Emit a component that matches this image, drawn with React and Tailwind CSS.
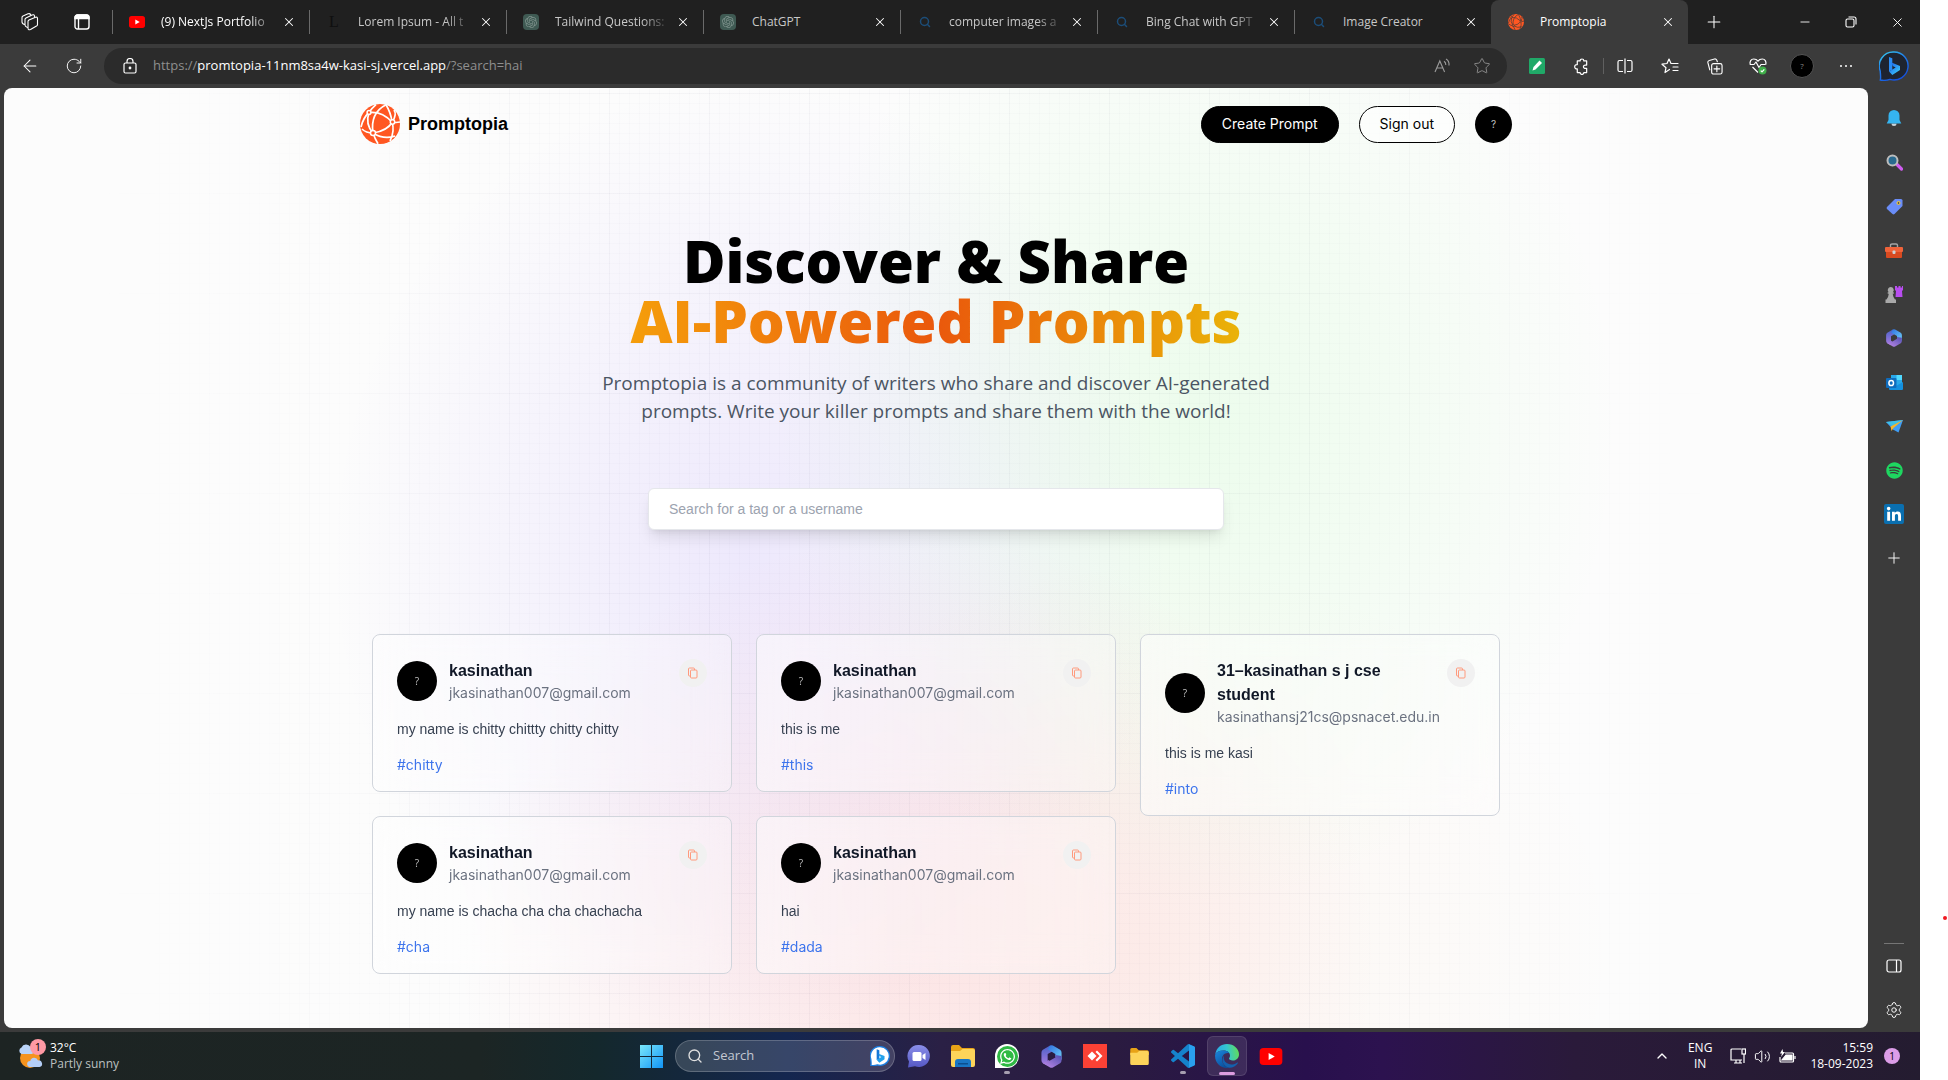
import React from "react";
import {
  Plus, Minus, X, ArrowLeft, RotateCw, Star, ChevronUp, Settings, Search, Volume2,
} from "lucide-react";
import { FaSpotify, FaWhatsapp } from "react-icons/fa";
import { SiOpenai } from "react-icons/si";

const UI = "font-['Open_Sans','Noto_Sans',sans-serif]";

/* ---------- logos ---------- */

function GlobeLogo({ className, line = "#fff" }) {
  return (
    <svg viewBox="0 0 40 40" className={className} aria-hidden="true">
      <circle cx="20" cy="20" r="20" fill="#ff5722" />
      <g fill="none" stroke={line} strokeWidth="1.7">
        <path d="M9 8.500Q22 7 32 18" />
        <path d="M9 8.500Q3 14 1 23" />
        <path d="M26 .8Q10 9 13 29" />
        <path d="M9 8.500Q5 20 13 29" />
        <path d="M32.500 18Q27 27 13 29" />
        <path d="M32.500 18Q37 10 34 6" />
        <path d="M32 18Q36 19 40 18" />
        <path d="M32 18Q35 27 30 37" />
        <path d="M13 29Q24 36 35 32" />
        <path d="M13 29Q15 35 18 39.800" />
        <path d="M13 29Q6 29 2 25" />
        <path d="M9 8.500Q12 4 16 .6" />
        <path d="M26 .8Q31 9 32 18" />
      </g>
      <g fill="#ff5722" stroke={line} strokeWidth="1.500">
        <circle cx="9" cy="8.500" r="1.900" />
        <circle cx="32.500" cy="18" r="2.200" />
        <circle cx="13" cy="29" r="2.500" />
      </g>
    </svg>
  );
}

function YouTube({ className }) {
  return (
    <svg viewBox="0 0 24 18" className={className} aria-hidden="true">
      <rect width="24" height="18" rx="4" fill="#f00" />
      <path d="M9.500 5.300v7.400l6.500-3.700z" fill="#fff" />
    </svg>
  );
}

function OpenAi({ className }) {
  return (
    <span className={`${className} flex items-center justify-center rounded-sm bg-[#3f5a53] text-[#7d918b]`}>
      <SiOpenai size={12} />
    </span>
  );
}

function Bing({ className }) {
  return (
    <svg viewBox="0 0 30 30" className={className} aria-hidden="true">
      <defs>
        <linearGradient id="bingRing" x1="0" y1="0" x2="0.600" y2="1">
          <stop offset="0" stopColor="#37d4f5" />
          <stop offset="0.500" stopColor="#1f7be8" />
          <stop offset="1" stopColor="#1552e0" />
        </linearGradient>
        <linearGradient id="bingB" x1="0" y1="0" x2="1" y2="1">
          <stop offset="0" stopColor="#1b5bf0" />
          <stop offset="1" stopColor="#3fd8f7" />
        </linearGradient>
      </defs>
      <path d="M15 1a14 14 0 1 1-4 27.400C8 29.300 4 29.500 1.300 29 2 27 1.500 24 1.200 20A14 14 0 0 1 15 1z" fill="#1e2430" stroke="url(#bingRing)" strokeWidth="1.400" />
      <path d="M10 6l3.300 1.200v11.500l-3.300 1.900z" fill="#2a8cf4" />
      <path d="M10 20.500l3.300-2 3.400-2-3-1.400-1.200-3.500 8.500 3.300v4L13.300 24z" fill="url(#bingB)" />
    </svg>
  );
}

function BingBubble({ className }) {
  return (
    <svg viewBox="0 0 30 30" className={className} aria-hidden="true">
      <path d="M15 1a14 14 0 1 1-4 27.400C8 29.300 4 29.500 1.300 29 2 27 1.500 24 1.200 20A14 14 0 0 1 15 1z" fill="#fff" stroke="#1b7ee0" strokeWidth="2" />
      <path d="M10 5l4 1.300v12.700l-4 2z" fill="#1577d8" />
      <path d="M10 20.500l4-2 3-2-3-1.400-1.200-3.500 9 3.300v5L14 25z" fill="#22a2ec" />
    </svg>
  );
}

function M365({ className }) {
  return (
    <svg viewBox="0 0 24 24" className={className} aria-hidden="true">
      <defs>
        <linearGradient id="m365a" x1="0" y1="0" x2="1" y2="1">
          <stop offset="0" stopColor="#2f6fe0" />
          <stop offset="1" stopColor="#6fd2f8" />
        </linearGradient>
        <linearGradient id="m365b" x1="0" y1="0" x2="0" y2="1">
          <stop offset="0" stopColor="#4a62c8" />
          <stop offset="1" stopColor="#a97be0" />
        </linearGradient>
        <linearGradient id="m365c" x1="0" y1="1" x2="1" y2="0">
          <stop offset="0" stopColor="#c38bea" />
          <stop offset="1" stopColor="#4f4fb0" />
        </linearGradient>
      </defs>
      <path d="M10.500 .6L3 5Q1.500 6 1.500 8v8q0 2 1.500 3l5 2.500V9.500L16 5z" fill="url(#m365b)" />
      <path d="M8 4.500l2.500-3.900q1.500-.8 3 0L21 5q1.500 1 1.500 3v7.500L16 12V9.300z" fill="url(#m365a)" />
      <path d="M22.500 11.500V16q0 2-1.500 3l-7.500 4.400q-1.500.8-3 0L3 19l5-2.500 0-1 2 1 6-3.500v-2.500z" fill="url(#m365c)" />
    </svg>
  );
}

function Folder({ className, dock }) {
  return (
    <svg viewBox="0 0 24 22" className={className} aria-hidden="true">
      <path d="M0 2a2 2 0 0 1 2-2h6l3 3h11a2 2 0 0 1 2 2v4H0z" fill="#e8a317" />
      <path d="M0 6h9l2.500-2H22a2 2 0 0 1 2 2v14a2 2 0 0 1-2 2H2a2 2 0 0 1-2-2z" fill="#fdd45a" />
      {dock && <path d="M4 22v-5a3 3 0 0 1 3-3h10a3 3 0 0 1 3 3v5z" fill="#1976c5" />}
      {dock && <path d="M7 18h10v1.500H7z" fill="#0c4f8f" />}
    </svg>
  );
}

function VsCode({ className }) {
  return (
    <svg viewBox="0 0 24 24" className={className} aria-hidden="true">
      <path
        fill="#1583cc"
        d="M23.150 2.587L18.210.210a1.494 1.494 0 0 0-1.705.290l-9.460 8.630-4.120-3.128a.999.999 0 0 0-1.276.057L.327 7.261A1 1 0 0 0 .326 8.740L3.899 12 .326 15.260a1 1 0 0 0 .001 1.479L1.650 17.940a.999.999 0 0 0 1.276.057l4.120-3.128 9.460 8.630a1.492 1.492 0 0 0 1.704.290l4.942-2.377A1.500 1.500 0 0 0 24 20.060V3.939a1.500 1.500 0 0 0-.850-1.352zm-5.146 14.861L10.826 12l7.178-5.448v10.896z"
      />
      <path d="M18 .2l5.200 2.400A1.500 1.500 0 0 1 24 4v16a1.500 1.500 0 0 1-.8 1.400L18 23.800z" fill="#2aa0ee" />
    </svg>
  );
}

function Edge({ className }) {
  return (
    <svg viewBox="0 0 24 24" className={className} aria-hidden="true">
      <defs>
        <linearGradient id="edgeA" x1="0" y1="0.500" x2="1" y2="0.400">
          <stop offset="0" stopColor="#2aa8e8" />
          <stop offset="0.500" stopColor="#33c6d0" />
          <stop offset="1" stopColor="#62dd58" />
        </linearGradient>
        <linearGradient id="edgeB" x1="0" y1="0" x2="0.600" y2="1">
          <stop offset="0" stopColor="#1b86dc" />
          <stop offset="1" stopColor="#0b4f9c" />
        </linearGradient>
      </defs>
      <path d="M.2 10.500C1.200 4 6 0 12 0c7 0 12 5 12 10.200 0 4-3 6.300-6.200 6.300-2.500 0-3.800-1-3.800-1.900 0-.8 1-1.200 1-3.200C15 8.700 12.500 6.500 8.700 6.500 4.500 6.500 1.500 8 .2 10.500z" fill="url(#edgeA)" />
      <path d="M.1 11C1 8 4.500 6.500 8.500 6.500c3 0 5 1.300 6 3-1.500-1-5.500-.5-7 3-1.800 4.500 1.300 10 6.500 11.300C6 25-.5 19 .1 11z" fill="url(#edgeB)" />
      <path d="M9 11.500c-1.500 5.500 3.500 9.500 8.500 9 2-.2 4-1.300 4.900-2 .5-.3.900.1.600.6C21 22.200 17.500 24 14 23.800 8 22 5.500 16 9 11.500z" fill="#1460ad" />
    </svg>
  );
}

function AnyDesk({ className }) {
  return (
    <svg viewBox="0 0 24 24" className={className} aria-hidden="true">
      <rect width="24" height="24" fill="#fb4135" />
      <path d="M9 7.500l4.500 4.500L9 16.500 4.500 12z" fill="#fff" />
      <path d="M12.500 8l1.500-1.500 5.500 5.500-5.500 5.500-1.500-1.500 4-4z" fill="#fff" />
    </svg>
  );
}

function VideoChat({ className }) {
  return (
    <svg viewBox="0 0 24 24" className={className} aria-hidden="true">
      <defs>
        <linearGradient id="vc" x1="0" y1="0" x2="0" y2="1">
          <stop offset="0" stopColor="#8a8ee8" />
          <stop offset="1" stopColor="#5558c4" />
        </linearGradient>
      </defs>
      <path d="M12 1a11 11 0 1 1-4 21.300L1 23.500l1-6A11 11 0 0 1 12 1z" fill="url(#vc)" />
      <rect x="5.500" y="8" width="9" height="9" rx="1.500" fill="#fff" />
      <path d="M15.500 11l3-2v7l-3-2z" fill="#fff" />
    </svg>
  );
}

function WindowsLogo({ className }) {
  return (
    <svg viewBox="0 0 23 23" className={className} aria-hidden="true">
      <defs>
        <linearGradient id="win" gradientUnits="userSpaceOnUse" x1="0" y1="0" x2="23" y2="23">
          <stop offset="0" stopColor="#7ae8fb" />
          <stop offset="1" stopColor="#1194f6" />
        </linearGradient>
      </defs>
      <path d="M0 0h11v11H0zM12 0h11v11H12zM0 12h11v11H0zM12 12h11v11H12z" fill="url(#win)" />
    </svg>
  );
}

function Weather({ className }) {
  return (
    <svg viewBox="0 0 26 26" className={className} aria-hidden="true">
      <circle cx="12" cy="15" r="10" fill="#f5931e" />
      <path d="M3.500 11a3.500 3.500 0 0 1 0-6.500 5 5 0 0 1 9-.5 3.500 3.500 0 0 1 1 7z" fill="#b9d3f8" />
      <path d="M12 24a3 3 0 0 1 .3-6 4 4 0 0 1 7.700-.5 3.300 3.300 0 0 1 1.500 6.500z" fill="#b3cdf6" />
    </svg>
  );
}

/* ---------- browser chrome ---------- */

const tabs = [
  { title: "(9) NextJs Portfolio", icon: <YouTube className="h-3 w-4" />, bright: true, fade: true },
  { title: "Lorem Ipsum - All t", icon: <span className="w-4 text-center font-['Liberation_Serif',serif] text-base text-[#0f0f0f]">L</span>, fade: true },
  { title: "Tailwind Questions:", icon: <OpenAi className="size-4" />, fade: true },
  { title: "ChatGPT", icon: <OpenAi className="size-4" /> },
  { title: "computer images a", icon: <Search className="size-3 text-[#1c4d78]" strokeWidth={3} />, fade: true },
  { title: "Bing Chat with GPT", icon: <Search className="size-3 text-[#1c4d78]" strokeWidth={3} />, fade: true },
  { title: "Image Creator", icon: <Search className="size-3 text-[#1c4d78]" strokeWidth={3} /> },
  { title: "Promptopia", icon: <GlobeLogo className="size-4" line="#3b3b3b" />, active: true },
];

function Tab({ title, icon, active, bright, fade }) {
  return (
    <div className={`flex h-full max-w-[197px] min-w-0 flex-1 items-center ${active ? "rounded-t-lg bg-[#3b3b3b]" : ""}`}>
      <span className={`h-6 w-px shrink-0 ${active ? "" : "bg-[#6a6a6a]"}`} />
      <button className={`ml-4 flex min-w-0 flex-1 items-center gap-4 text-left ${bright || active ? "text-white" : "text-[#c8c8c8]"}`}>
        <span className="flex w-4 shrink-0 items-center justify-center">{icon}</span>
        <span className={`min-w-0 flex-1 overflow-hidden text-[12px] whitespace-nowrap ${fade ? "[mask-image:linear-gradient(to_right,#000_75%,transparent)]" : ""}`}>{title}</span>
      </button>
      <button aria-label={`Close ${title}`} className="mr-2 flex size-6 shrink-0 items-center justify-center text-white">
        <X size={14} strokeWidth={1.75} />
      </button>
    </div>
  );
}

function TitleBar() {
  return (
    <header className="flex h-11 shrink-0 items-center bg-[#202020] text-white">
      <div className="flex w-28 shrink-0 items-center gap-[35px] pl-[21px]">
        <button aria-label="Workspaces">
          <svg viewBox="0 0 18 18" className="size-[18px]" fill="none" stroke="currentColor" strokeWidth="1.100" strokeLinejoin="round">
            <path d="M7 8.500Q7 7.500 8 7l6.500-2.700q2-.6 2 1.200v6q0 1-1 1.600L9.500 16.500Q7 17.500 7 15z" />
            <path d="M7 14.500l-1-.3Q4 13.500 4 12V6.500Q4 5.500 5 5l6-3q2-.8 2.500.8V4.500" />
            <path d="M4 11.500Q1 11 1 9V4.500Q1 3.500 2 3l5-2.200q1.800-.6 2.500.6l.3 1" />
          </svg>
        </button>
        <button aria-label="Tab actions">
          <svg viewBox="0 0 16 16" className="size-4" fill="none" stroke="currentColor" strokeWidth="1.400">
            <rect x="1" y="1" width="14" height="14" rx="2.500" />
            <path d="M1 3.500A2.500 2.500 0 0 1 3.500 1h9A2.500 2.500 0 0 1 15 3.500V4.500H1z" fill="currentColor" />
            <path d="M4.500 5v10" />
          </svg>
        </button>
      </div>
      <div className="flex h-full min-w-0 flex-1 items-center">
        {tabs.map((t) => <Tab key={t.title} {...t} />)}
        <button aria-label="New tab" className="ml-2.5 flex size-8 items-center justify-center"><Plus size={20} strokeWidth={1.25} /></button>
      </div>
      <button aria-label="Minimise" className="flex w-[46px] justify-center"><Minus size={14} strokeWidth={1.5} /></button>
      <button aria-label="Restore" className="flex w-[46px] justify-center">
        <svg viewBox="0 0 12 12" className="size-3" fill="none" stroke="currentColor" strokeWidth="1.100">
          <rect x="1" y="3" width="8" height="8" rx="1.500" />
          <path d="M3.500 1H9a2 2 0 0 1 2 2v5.500" />
        </svg>
      </button>
      <button aria-label="Close" className="flex w-[46px] justify-center"><X size={15} strokeWidth={1.5} /></button>
    </header>
  );
}

function ToolBar() {
  return (
    <div className="flex h-11 shrink-0 items-center bg-[#3b3b3b] text-white">
      <div className="flex w-[104px] shrink-0 items-center">
        <button aria-label="Back" className="ml-[19px] flex w-[22px] justify-center"><ArrowLeft size={20} strokeWidth={1.25} /></button>
        <button aria-label="Refresh" className="ml-[22px] flex w-[22px] justify-center"><RotateCw size={18} strokeWidth={1.25} /></button>
      </div>
      <div className="flex h-9 min-w-0 flex-1 items-center rounded-full bg-[#2b2b2b] pr-4 pl-[19px]">
        <svg viewBox="0 0 14 16" className="mr-4 h-4 w-[14px] shrink-0" fill="none" stroke="currentColor" strokeWidth="1.200">
          <rect x="1" y="5" width="12" height="10" rx="1.500" />
          <path d="M4 5V3.500a3 3 0 0 1 6 0V5" />
          <circle cx="7" cy="10" r=".8" fill="currentColor" />
        </svg>
        <div className="min-w-0 flex-1 truncate text-[13px] text-[#8f8f8f]">
          https://<span className="text-white">promtopia-11nm8sa4w-kasi-sj.vercel.app</span>/?search=hai
        </div>
        <button aria-label="Read aloud" className="mr-[22px] text-[#9a9a9a]">
          <svg viewBox="0 0 17 16" className="h-4 w-[17px]" fill="none" stroke="currentColor" strokeWidth="1.100">
            <path d="M1 14L5.800 3 10.600 14M2.800 10h6M10 3.200Q12 4.500 11.800 7M12 1Q15.500 3 15 7.500" />
          </svg>
        </button>
        <button aria-label="Add to favourites" className="text-[#9a9a9a]"><Star size={18} strokeWidth={1.1} /></button>
      </div>
      <div className="flex w-[413px] shrink-0 items-center">
        <button aria-label="Editor extension" className="ml-[19px] flex w-[22px] justify-center">
          <svg viewBox="0 0 16 16" className="size-4">
            <rect width="16" height="16" rx="1.500" fill="#20a968" />
            <path d="M3.500 12.500l1-3.500 6-6.500 2.500 2.500-6.500 6.500z" fill="#fff" />
          </svg>
        </button>
        <button aria-label="Extensions" className="ml-[22px] flex w-[22px] justify-center">
          <svg viewBox="0 0 16 18" className="h-[17px] w-[15px]" fill="none" stroke="currentColor" strokeWidth="1.300" strokeLinejoin="round">
            <path d="M3.500 3h3a2 2 0 1 1 4 0h3v4.500h-1.200a1.800 1.800 0 1 0 0 3.500h1.200v4.500h-3a2 2 0 1 1-4 0h-3V11.500a2.300 2.300 0 1 1 0-4.500z" />
          </svg>
        </button>
        <span className="ml-[11px] h-4 w-px bg-[#606060]" />
        <button aria-label="Split screen" className="ml-[10px] flex w-[22px] justify-center">
          <svg viewBox="0 0 16 16" className="size-4" fill="none" stroke="currentColor" strokeWidth="1.200">
            <path d="M6 2.500H2.500A1.500 1.500 0 0 0 1 4v8a1.500 1.500 0 0 0 1.500 1.500H6M10 2.500h3.500A1.500 1.500 0 0 1 15 4v8a1.500 1.500 0 0 1-1.500 1.500H10M8 .5v15" />
          </svg>
        </button>
        <button aria-label="Favourites" className="ml-[23px] flex w-[22px] justify-center">
          <svg viewBox="0 0 18 16" className="h-4 w-[18px]" fill="none" stroke="currentColor" strokeWidth="1.200" strokeLinejoin="round" strokeLinecap="round">
            <path d="M8.500 11.500L4 14.500l1-4.800L1 6.200l5-.7L8 1l2 4.500h7M12 9h5M12 12.500h5" />
          </svg>
        </button>
        <button aria-label="Collections" className="ml-[22px] flex w-[22px] justify-center">
          <svg viewBox="0 0 18 18" className="size-[17px]" fill="none" stroke="currentColor" strokeWidth="1.200" strokeLinecap="round">
            <rect x="6" y="6" width="11" height="11" rx="2" />
            <path d="M11.500 8.500v6M8.500 11.500h6M4 12.500L2 5a2 2 0 0 1 1.500-2.400L9 1a2 2 0 0 1 2.500 1.500L12 4" />
          </svg>
        </button>
        <button aria-label="Browser essentials" className="ml-[22px] flex w-[22px] justify-center">
          <svg viewBox="0 0 18 18" className="size-[18px]" fill="none" stroke="currentColor" strokeWidth="1.200" strokeLinejoin="round">
            <path d="M9 15.500L3.500 10M1.200 7.500C.5 4.500 2 2 4.700 2 7 2 8.200 3 9 4.200 9.800 3 11 2 13.300 2 16 2 17.500 4.500 16.800 7.500M1 7.500h4L7 5l3 5.500 2-3h4.500" />
            <circle cx="13.500" cy="13.500" r="4" fill="#3fae49" stroke="none" />
            <path d="M11.700 13.600l1.300 1.200 2.300-2.500" />
          </svg>
        </button>
        <button aria-label="Profile" className="ml-[21px] flex size-6 items-center justify-center rounded-full border border-[#555] bg-black text-[8px] text-[#888]">?</button>
        <button aria-label="Settings and more" className="ml-[21px] flex w-[22px] items-center justify-center gap-[3px]">
          <span className="size-[2px] rounded-full bg-white" /><span className="size-[2px] rounded-full bg-white" /><span className="size-[2px] rounded-full bg-white" />
        </button>
        <button aria-label="Bing" className="ml-[22px]"><Bing className="size-[30px]" /></button>
      </div>
    </div>
  );
}

function SideIcon({ label, children }) {
  return <button aria-label={label} className="flex h-11 w-full items-center justify-center">{children}</button>;
}

function SideBar() {
  return (
    <aside className="flex w-[52px] shrink-0 flex-col bg-[#3b3b3b] pt-2 text-white">
      <SideIcon label="Notifications">
        <svg viewBox="0 0 16 18" className="h-[18px] w-4">
          <path d="M5.500 14.500h5a2.500 2.500 0 0 1-5 0z" fill="#c9d3da" />
          <path d="M8 1a5.500 5.500 0 0 1 5.500 5.500V11l1.800 3.500H.700L2.500 11V6.500A5.500 5.500 0 0 1 8 1z" fill="#35b4f0" />
        </svg>
      </SideIcon>
      <SideIcon label="Search">
        <svg viewBox="0 0 17 17" className="size-[17px]">
          <path d="M11 10.500l4.500 4.500" stroke="#d05cf0" strokeWidth="3.200" strokeLinecap="round" />
          <circle cx="6.500" cy="6.500" r="5" fill="#2a6a8f" stroke="#bdbdbd" strokeWidth="2" />
        </svg>
      </SideIcon>
      <SideIcon label="Shopping">
        <svg viewBox="0 0 17 17" className="size-[17px]">
          <path d="M9 1h6a1.500 1.500 0 0 1 1.500 1.500V8L8.500 16a1.500 1.500 0 0 1-2 0L1 11a1.500 1.500 0 0 1 0-2z" fill="#6a8df8" />
          <circle cx="12.500" cy="5" r="1.500" fill="#555" stroke="#ffd22e" strokeWidth="1" />
        </svg>
      </SideIcon>
      <SideIcon label="Tools">
        <svg viewBox="0 0 18 15" className="h-[15px] w-[18px]">
          <path d="M5.500 4V2.200Q5.500 1 7 1h4q1.500 0 1.500 1.200V4" fill="none" stroke="#a5a5a5" strokeWidth="1.400" />
          <rect y="4" width="18" height="5" rx="1" fill="#f0633a" />
          <path d="M1 9h16v5a1 1 0 0 1-1 1H2a1 1 0 0 1-1-1z" fill="#d94a20" />
          <rect x="7.500" y="7.500" width="3" height="3.500" rx="1" fill="#cfd3d6" />
        </svg>
      </SideIcon>
      <SideIcon label="Games">
        <svg viewBox="0 0 18 18" className="size-[18px]">
          <path d="M10 1h2v1.500h1.500V1h2v1.500H17V1h1v4l-1 1 .5 6H10.500L11 6l-1-1z" fill="#b84df0" />
          <path d="M5.800 2a3 3 0 0 1 2 5.200h1v1.600H7.700Q8 12 10 14.500h1V18H.500v-3.500h1Q3.500 12 3.800 8.800H2.700V7.200h1A3 3 0 0 1 5.800 2z" fill="#a9a9a9" />
        </svg>
      </SideIcon>
      <SideIcon label="Microsoft 365"><M365 className="size-[18px]" /></SideIcon>
      <SideIcon label="Outlook">
        <svg viewBox="0 0 17 17" className="size-[17px]">
          <path d="M5 1h11v14H5z" fill="#28a8ea" />
          <path d="M10.500 1H16v5h-5.500z" fill="#50d9ff" />
          <path d="M3 9l7 3 7-4v7a1 1 0 0 1-1 1H4a1 1 0 0 1-1-1z" fill="#1490df" />
          <rect y="4" width="10.500" height="10" rx="1" fill="#0f6cbd" />
          <ellipse cx="5.200" cy="9" rx="2.300" ry="2.600" fill="none" stroke="#fff" strokeWidth="1.500" />
        </svg>
      </SideIcon>
      <SideIcon label="Drop">
        <svg viewBox="0 0 17 13" className="h-[13px] w-[17px]">
          <path d="M0 2l17-2-4.500 12.500L7 9.500z" fill="#3f9df5" />
          <path d="M0 2l17-2L6 6z" fill="#3ec1e8" />
          <path d="M17 0L4.500 6.500 5.500 11 7.500 8z" fill="#f7b52c" />
        </svg>
      </SideIcon>
      <SideIcon label="Spotify"><FaSpotify size={17} className="text-[#1ed760]" /></SideIcon>
      <SideIcon label="LinkedIn">
        <span className="flex size-5 items-center justify-center rounded-xs bg-[#0a6fb0]">
          <svg viewBox="0 0 20 20" className="size-5" fill="#fff">
            <path d="M3.200 7.800h2.900v9H3.200zM8 7.800h2.800v1.300c.6-1 1.600-1.500 2.800-1.500 2.500 0 3.400 1.500 3.400 4.200v5h-2.900v-4.600c0-1.400-.4-2.200-1.500-2.200-1.200 0-1.700.8-1.700 2.200v4.600H8z" />
            <circle cx="4.650" cy="4.600" r="1.800" />
          </svg>
        </span>
      </SideIcon>
      <SideIcon label="Customise"><Plus size={18} strokeWidth={1.25} /></SideIcon>
      <div className="mt-auto flex flex-col items-center">
        <span className="h-px w-5 bg-[#757575]" />
        <SideIcon label="Hide sidebar">
          <svg viewBox="0 0 16 16" className="size-4" fill="none" stroke="currentColor" strokeWidth="1.200">
            <rect x="1" y="2" width="14" height="12" rx="2" />
            <path d="M10.500 2v12" />
          </svg>
        </SideIcon>
        <SideIcon label="Settings"><Settings size={18} strokeWidth={1.25} /></SideIcon>
      </div>
    </aside>
  );
}

/* ---------- page ---------- */

const columns = [
  [
    { name: "kasinathan", email: "jkasinathan007@gmail.com", prompt: "my name is chitty chittty chitty chitty", tag: "#chitty" },
    { name: "kasinathan", email: "jkasinathan007@gmail.com", prompt: "my name is chacha cha cha chachacha", tag: "#cha" },
  ],
  [
    { name: "kasinathan", email: "jkasinathan007@gmail.com", prompt: "this is me", tag: "#this" },
    { name: "kasinathan", email: "jkasinathan007@gmail.com", prompt: "hai", tag: "#dada" },
  ],
  [{ name: "31–kasinathan s j cse student", email: "kasinathansj21cs@psnacet.edu.in", prompt: "this is me kasi", tag: "#into" }],
];

function PromptCard({ name, email, prompt, tag }) {
  return (
    <article className="rounded-lg border border-gray-300 bg-[linear-gradient(to_right,rgba(255,255,255,0.5),rgba(255,255,255,0.3))] p-6 pb-4 backdrop-blur-lg">
      <div className="flex items-start justify-between gap-5">
        <div className="flex min-w-0 flex-1 items-center gap-3">
          <span className="flex size-10 shrink-0 items-center justify-center rounded-full bg-black text-[10px] text-[#c0c0c0]">?</span>
          <div className="min-w-0">
            <h3 className="font-['Liberation_Sans',sans-serif] text-base font-bold text-[#111827]">{name}</h3>
            <p className="font-['Inter',sans-serif] text-sm whitespace-nowrap text-[#6b7280]">{email}</p>
          </div>
        </div>
        <button aria-label="Copy prompt" className="flex size-7 shrink-0 items-center justify-center rounded-full bg-[#f1f1f1]">
          <svg viewBox="0 0 12 12" className="size-3" fill="none" stroke="#ff9a7d" strokeWidth="1">
            <rect x="3.500" y="3" width="6.500" height="8" rx="1" />
            <path d="M3.500 9H2.500a1 1 0 0 1-1-1V2a1 1 0 0 1 1-1h4a1 1 0 0 1 1 1v1" />
          </svg>
        </button>
      </div>
      <p className="my-4 font-['Liberation_Sans',sans-serif] text-sm text-[#374151]">{prompt}</p>
      <a href="#tag" className="block font-['Inter',sans-serif] text-sm text-[#3d74ec]">{tag}</a>
    </article>
  );
}

function Backdrop() {
  return (
    <div className="pointer-events-none absolute inset-0" aria-hidden="true">
      <div className="absolute inset-0 bg-[radial-gradient(ellipse_420px_480px_at_40%_50%,rgba(130,90,255,0.12),rgba(130,90,255,0.06)_50%,transparent),radial-gradient(ellipse_420px_480px_at_64%_36%,rgba(130,255,130,0.13),rgba(130,255,130,0.07)_50%,transparent),radial-gradient(ellipse_460px_420px_at_49%_92%,rgba(255,80,100,0.12),rgba(255,80,100,0.07)_50%,transparent),radial-gradient(ellipse_460px_400px_at_62%_92%,rgba(255,150,60,0.05),transparent)]" />
      <div className="absolute inset-0 bg-[linear-gradient(to_right,rgba(60,60,90,0.014)_1px,transparent_1px),linear-gradient(to_bottom,rgba(60,60,90,0.014)_1px,transparent_1px),linear-gradient(to_right,rgba(60,60,90,0.022)_1px,transparent_1px),linear-gradient(to_bottom,rgba(60,60,90,0.022)_1px,transparent_1px)] [mask-image:linear-gradient(to_right,transparent_5%,#000_30%,#000_70%,transparent_92%)] bg-[size:10px_10px,10px_10px,100px_100px,100px_100px] bg-[position:5px_5px]" />
    </div>
  );
}

function Page() {
  return (
    <main className="relative mb-1 min-w-0 flex-1 overflow-hidden rounded-lg bg-[#fcfcfc]">
      <Backdrop />
      <div className="relative mx-auto flex max-w-[1280px] flex-col items-center px-16">
        <nav className="flex w-full items-center justify-between pt-4">
          <a href="#home" className="flex items-center gap-2">
            <GlobeLogo className="size-10" />
            <span className="font-['Liberation_Sans',sans-serif] text-lg font-bold text-black">Promptopia</span>
          </a>
          <div className="flex items-center gap-5 font-['Inter',sans-serif] text-sm">
            <button className="h-[37px] rounded-full border border-black bg-black px-5 text-white">Create Prompt</button>
            <button className="h-[37px] rounded-full border border-black bg-white/60 px-5 text-black">Sign out</button>
            <button aria-label="Profile" className="flex size-[37px] items-center justify-center rounded-full bg-black text-[10px] text-[#c0c0c0]">?</button>
          </div>
        </nav>
        <section className="mt-[87px] flex flex-col items-center text-center font-['Open_Sans','Noto_Sans',sans-serif]">
          <h1 className="text-[58px] leading-[60px] font-extrabold text-black">
            Discover &amp; Share
            <br />
            <span className="bg-[linear-gradient(to_right,#f59e0b,#ea580c,#eab308)] bg-clip-text text-transparent">AI-Powered Prompts</span>
          </h1>
          <p className="mt-[18px] max-w-[680px] text-[19px] leading-7 text-[#4b5563]">
            Promptopia is a community of writers who share and discover AI-generated prompts. Write your killer prompts and share them with the world!
          </p>
        </section>
        <form className="mt-[63px] w-full max-w-xl">
          <input
            type="text"
            aria-label="Search for a tag or a username"
            placeholder="Search for a tag or a username"
            className="block h-[42px] w-full rounded-md border border-gray-200 bg-white px-5 font-['Liberation_Sans',sans-serif] text-sm shadow-lg outline-none placeholder:text-[#9ca3af]"
          />
        </form>
        <section className="mt-[104px] grid w-full grid-cols-3 items-start gap-6 px-3">
          {columns.map((cards, i) => (
            <div key={i} className="flex flex-col gap-6">
              {cards.map((c) => <PromptCard key={c.tag} {...c} />)}
            </div>
          ))}
        </section>
      </div>
    </main>
  );
}

/* ---------- taskbar ---------- */

function TaskIcon({ label, running, active, children }) {
  return (
    <button aria-label={label} className={`relative flex h-10 w-10 items-center justify-center rounded-md ${active ? "border border-white/10 bg-white/10" : ""}`}>
      {children}
      {running && <span className="absolute bottom-0.5 left-1/2 h-[3px] w-1.5 -translate-x-1/2 rounded-full bg-[#a79fb0]" />}
      {active && <span className="absolute bottom-0 left-1/2 h-[3px] w-4 -translate-x-1/2 rounded-full bg-[#dc9de0]" />}
    </button>
  );
}

function TaskBar() {
  return (
    <footer className="grid h-12 shrink-0 grid-cols-[1fr_auto_1fr] items-center bg-[linear-gradient(to_right,#1d2423_0%,#1c2524_25%,#14282c_31%,#14264f_41%,#2a2045_49%,#2a1b40_58%,#28104d_68%,#2c124f_72%,#2a1a3a_82%,#241c30_100%)] text-white">
      <div className="flex items-center">
        <button className="flex items-center gap-1.5 pl-[18px] text-left text-[12px] leading-4">
          <span className="relative">
            <Weather className="size-[26px]" />
            <span className="absolute -top-1 -right-0.5 flex size-4 items-center justify-center rounded-full bg-[#ff99a4] text-[11px] text-black">1</span>
          </span>
          <span>
            <span className="block">32°C</span>
            <span className="block text-[#bcc0c0]">Partly sunny</span>
          </span>
        </button>
      </div>
      <div className="flex items-center gap-1 pl-1.5">
        <button aria-label="Start" className="mr-1 flex w-8 justify-center"><WindowsLogo className="size-[23px]" /></button>
        <label className="flex h-8 w-[220px] items-center rounded-full border border-white/20 bg-white/15 pr-1 pl-[11px]">
          <Search size={16} strokeWidth={2} className="text-[#e0e0e0]" />
          <input type="text" aria-label="Search" placeholder="Search" className="ml-2.5 w-0 min-w-0 flex-1 bg-transparent text-[13px] outline-none placeholder:text-[#c3c8d2]" />
          <BingBubble className="size-5" />
        </label>
        <TaskIcon label="Chat"><VideoChat className="size-6" /></TaskIcon>
        <TaskIcon label="File Explorer"><Folder className="h-[22px] w-6" dock /></TaskIcon>
        <TaskIcon label="WhatsApp" running>
          <span className="flex size-6 items-center justify-center rounded-full rounded-bl-xs bg-white">
            <span className="flex size-[21px] items-center justify-center rounded-full bg-[#2fb944]"><FaWhatsapp size={17} /></span>
          </span>
        </TaskIcon>
        <TaskIcon label="Microsoft 365"><M365 className="size-[23px]" /></TaskIcon>
        <TaskIcon label="AnyDesk"><AnyDesk className="size-6" /></TaskIcon>
        <TaskIcon label="Folder"><Folder className="h-[17px] w-[21px]" /></TaskIcon>
        <TaskIcon label="Visual Studio Code" running><VsCode className="size-6" /></TaskIcon>
        <TaskIcon label="Microsoft Edge" active><Edge className="size-6" /></TaskIcon>
        <TaskIcon label="YouTube"><YouTube className="h-[17px] w-6" /></TaskIcon>
      </div>
      <div className="flex items-center justify-end pr-5 text-[12px] leading-4">
        <button aria-label="Show hidden icons" className="mr-[18px]"><ChevronUp size={16} strokeWidth={2} /></button>
        <button className="mr-[18px] text-center">ENG<br />IN</button>
        <button aria-label="Network, volume and battery" className="mr-[14px] flex items-center gap-2">
          <svg viewBox="0 0 16 16" className="size-4" fill="none" stroke="currentColor" strokeWidth="1.200">
            <path d="M11 1H2a1 1 0 0 0-1 1v10h11M4 15h8M6 12v3M10 12v3M14 6v9" />
            <rect x="12" y="1" width="3.500" height="5" />
          </svg>
          <Volume2 size={17} strokeWidth={1.4} />
          <svg viewBox="0 0 17 14" className="h-[14px] w-[17px]" fill="none" stroke="currentColor" strokeWidth="1.200">
            <path d="M6 4h7.500a1 1 0 0 1 1 1v7a1 1 0 0 1-1 1H2a1 1 0 0 1-1-1V8" />
            <path d="M7 6h6v5H3zM16 7v3" fill="currentColor" />
            <path d="M3.500 0L1 4.500h2L2 8l4-5H4z" fill="currentColor" stroke="none" />
          </svg>
        </button>
        <button className="mr-[11px] text-right">15:59<br />18-09-2023</button>
        <button aria-label="1 notification" className="flex size-4 items-center justify-center rounded-full bg-[#dc9de8] text-[10px] text-black">1</button>
      </div>
    </footer>
  );
}

export default function App() {
  return (
    <div className={`flex h-screen bg-white ${UI}`}>
      <div className="flex min-w-0 flex-1 flex-col">
        <TitleBar />
        <ToolBar />
        <div className="flex min-h-0 flex-1 bg-[#3b3b3b] pl-1">
          <Page />
          <SideBar />
        </div>
        <TaskBar />
      </div>
      <div className="flex w-7 shrink-0 items-end justify-end bg-white pr-px pb-40">
        <span className="size-1 rounded-full bg-[#f01820]" />
      </div>
    </div>
  );
}
